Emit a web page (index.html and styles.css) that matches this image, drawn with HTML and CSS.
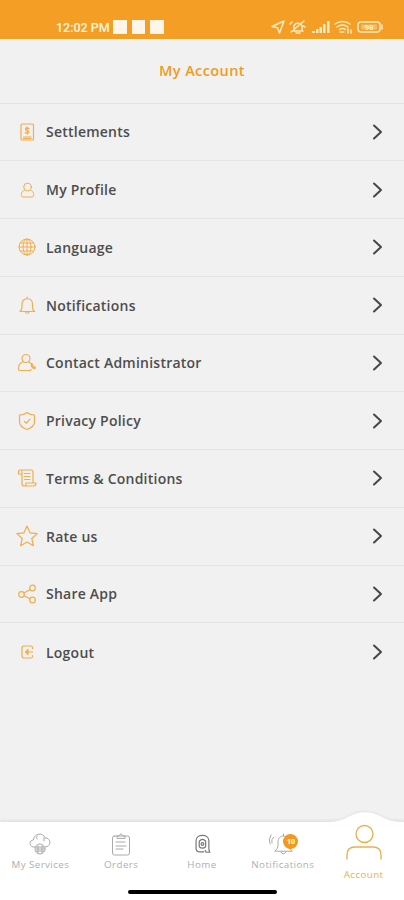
FILE: index.html
```html
<!DOCTYPE html>
<html lang="en">

<head>
    <meta charset="UTF-8">
    <meta name="viewport" content="width=device-width, initial-scale=1">
    <link rel="stylesheet" href="styles.css">
    <title>My Account</title>
</head>

<body>
    <div class="status">
        <span class="time">12:02 PM</span>
        <span class="squares"><i></i><i></i><i></i></span>
        <svg class="status-icons" width="116" height="16" viewBox="0 0 116 16">
            <path d="M2 7.5 14 2 9.5 14 7.5 8.8z" />
            <path d="M22 12h11M24 11V7a4.300 4.300 0 0 1 8 0v4M26 14h4M21 13 34 2M20 5l2-2M33 7l2 1" />
            <path class="solid" d="M42 12h3v2h-3zM46 10h2.500v4H46zM49.500 8H52v6h-2.500zM53 5h2.500v9H53zM57 2h2.500v12H57z" />
            <path d="M65 5q7.500-5 15 0M67 8q5.500-4 11 0M69.500 10.500q3-2 6 0M70 13h4M78 10v4M81 11v3" />
            <rect x="88" y="3" width="22" height="10" rx="3" />
            <path d="M112 6v4" />
            <rect class="solid" x="91" y="5.500" width="16" height="5" rx="1" opacity=".4" />
            <text x="99" y="11">98</text>
        </svg>
    </div>

    <header class="title">My Account</header>

    <ul class="menu">
        <li>
            <svg class="icon" viewBox="0 0 24 24"><rect x="6" y="4" width="12.500" height="16" rx="1" /><path d="M14 8.500q-3.500-1.500-3.500.7c0 1.800 3.500.8 3.500 2.700q0 2-3.700.7M12.200 7v7M8.500 17h7.500M8.500 18.500h7.500" /></svg>
            <span>Settlements</span>
            <svg class="arrow" viewBox="0 0 12 18"><path d="M2 2.500 9 9l-7 6.500" /></svg>
        </li>
        <li>
            <svg class="icon thin" viewBox="0 0 24 24"><circle cx="12.500" cy="9" r="3.800" /><path d="M9.500 12c-3 1.500-3.500 4-3 6q.4 1 1.500 1h9q1.100 0 1.500-1c.5-2 0-4.500-3-6" /></svg>
            <span>My Profile</span>
            <svg class="arrow" viewBox="0 0 12 18"><path d="M2 2.500 9 9l-7 6.500" /></svg>
        </li>
        <li>
            <svg class="icon thin" viewBox="0 0 24 24"><circle cx="12" cy="12" r="8" /><ellipse cx="12" cy="12" rx="4" ry="8" /><path d="M12 4v16M4 12h16M5.500 8h13M5.500 16h13" /></svg>
            <span>Language</span>
            <svg class="arrow" viewBox="0 0 12 18"><path d="M2 2.500 9 9l-7 6.500" /></svg>
        </li>
        <li>
            <svg class="icon" viewBox="0 0 24 24"><path d="M5 18.500q2-2 2-4V11c0-7 10.500-7 10.500 0v3.500q0 2 2 4zM10.500 19q1.700 3 3.500 0M12.200 4v1.500" /></svg>
            <span>Notifications</span>
            <svg class="arrow" viewBox="0 0 12 18"><path d="M2 2.500 9 9l-7 6.500" /></svg>
        </li>
        <li>
            <svg class="icon" viewBox="0 0 24 24"><circle cx="11" cy="7.500" r="4" /><path d="M7.800 11C4.500 12 3.500 15 3.500 18q0 1.500 1.500 1.500h10.500l.5-1M14 11l2 1.500M16.500 12.500c-1 3 1.500 6 4 4.500l-1.500-1.500-1 .5-1-1.500.8-1z" /></svg>
            <span>Contact Administrator</span>
            <svg class="arrow" viewBox="0 0 12 18"><path d="M2 2.500 9 9l-7 6.500" /></svg>
        </li>
        <li>
            <svg class="icon" viewBox="0 0 24 24"><path d="M12 3.500q3 2.500 7.500 2.500v7c0 4-3.500 6-7.500 7.500-4-1.500-7.500-3.500-7.500-7.500V6Q9 6 12 3.500zM9.500 12.500l2 1.700 3.500-4" /></svg>
            <span>Privacy Policy</span>
            <svg class="arrow" viewBox="0 0 12 18"><path d="M2 2.500 9 9l-7 6.500" /></svg>
        </li>
        <li>
            <svg class="icon" viewBox="0 0 24 24"><path d="M7 8H3.500V6q0-2 2-2H16q2 0 2 2v10.500M5.500 4Q7 4 7 6v12q0 2 2 2h9.500q2.500 0 2.500-3H11v1.500Q11 20 9 20M9.500 7.500H15M9.500 10.500H15M9.500 13.500H15" /></svg>
            <span>Terms &amp; Conditions</span>
            <svg class="arrow" viewBox="0 0 12 18"><path d="M2 2.500 9 9l-7 6.500" /></svg>
        </li>
        <li>
            <svg class="icon" viewBox="0 0 24 24"><path d="m12 2 3 6.800 7.200.8-5.400 4.900 1.600 7.200L12 18l-6.400 3.700 1.600-7.200-5.400-4.900 7.200-.8z" /></svg>
            <span>Rate us</span>
            <svg class="arrow" viewBox="0 0 12 18"><path d="M2 2.500 9 9l-7 6.500" /></svg>
        </li>
        <li>
            <svg class="icon" viewBox="0 0 24 24"><circle cx="6.500" cy="12.500" r="2.800" /><circle cx="17.500" cy="6" r="2.800" /><circle cx="17.500" cy="18" r="2.800" /><path d="m9 11 6-3.500M9 13.800l6 3" /></svg>
            <span>Share App</span>
            <svg class="arrow" viewBox="0 0 12 18"><path d="M2 2.500 9 9l-7 6.500" /></svg>
        </li>
        <li>
            <svg class="icon" viewBox="0 0 24 24"><path d="M17.500 8.500V7.500q0-1.500-1.500-1.500H9Q7 6 7 8v8q0 2 2 2h7q1.500 0 1.500-1.500V15.500M17.500 12h-6M13 9.500 10.500 12l2.500 2.500z" /></svg>
            <span>Logout</span>
            <svg class="arrow" viewBox="0 0 12 18"><path d="M2 2.500 9 9l-7 6.500" /></svg>
        </li>
    </ul>

    <nav class="tabs">
        <svg class="bump" width="76" height="14" viewBox="0 0 76 14"><path d="M0 14V12Q13 12 22 6.500 38-2 54 6.500q9 5.500 22 5.500v2z" /></svg>
        <a class="tab">
            <svg viewBox="0 0 24 24"><path d="M7 15H5c-4-1-4-7 .5-7C6 1 15 0 17 6c5-1 7 7 2 8.500l-2 .5M9 4q-1 2 0 3M16 6v3" /><circle cx="12" cy="17" r="5" /><path d="M8 15h8M8 17h8M8 19h8M10 14v7M14 14v7" /></svg>
            <span>My Services</span>
        </a>
        <a class="tab">
            <svg viewBox="0 0 24 24"><rect x="3.500" y="4" width="17" height="19" rx="2" /><path d="M8 6V4h2q2-4 4 0h2v2zM7 10h9M7 14h10M7 17h7" /></svg>
            <span>Orders</span>
        </a>
        <a class="tab home">
            <svg viewBox="0 0 24 24"><path d="M9 20.500q-3.500-.5-3.500-4V8.500c0-8 14-8 14 0v8q0 3 1 4.500h-4l-1-2M9 20.500h5M9 15V9q3.500-4 7 0v6q-3.500 3-7 0z" /><circle cx="12.500" cy="12" r="1.500" /></svg>
            <span>Home</span>
        </a>
        <a class="tab">
            <svg viewBox="0 0 24 24"><path d="M4 19q3-2 3-5v-4c0-8 11-8 11 0v4q0 3 3 5zM10 20q2 4 5 0M3 5Q0 7 1 11M0 3q-3 4-1 9M12.500 2v2" /></svg>
            <b class="badge">10</b>
            <span>Notifications</span>
        </a>
        <a class="tab active">
            <svg viewBox="0 0 38 38"><circle cx="19.500" cy="10" r="8.500" /><path d="M2 35v-4q0-8 8-8h18q8 0 8 8v4" /></svg>
            <span>Account</span>
        </a>
        <div class="handle"></div>
    </nav>
</body>

</html>
```
FILE: styles.css
```css
* {
    box-sizing: border-box;
}

body {
    margin: 0;
    height: 900px;
    display: flex;
    flex-direction: column;
    overflow: hidden;
    background: #f1f1f1;
    font-family: "Open Sans", "Noto Sans", sans-serif;
}

svg {
    fill: none;
    stroke-linecap: round;
    stroke-linejoin: round;
    overflow: visible;
}

.status {
    height: 39px;
    padding: 15px 18px 0 56px;
    display: flex;
    align-items: center;
    background: #f59e25;
    color: #fff3df;
}

.time {
    width: 57px;
    font: 500 12.500px Roboto, sans-serif;
    white-space: nowrap;
}

.squares {
    display: flex;
    gap: 5px;
}

.squares i {
    width: 13.500px;
    height: 13.500px;
    background: #fff6e9;
}

.status-icons {
    margin-left: auto;
    stroke: #ffe9c4;
    stroke-width: 1.500;
}

.status-icons .solid {
    fill: #ffe9c4;
    stroke: none;
}

.status-icons text {
    fill: #fff3df;
    stroke: none;
    font: bold 8px Roboto, sans-serif;
    text-anchor: middle;
}

.title {
    height: 64.500px;
    border-bottom: 1.500px solid #e2e2e2;
    color: #f39a20;
    font-size: 14.500px;
    font-weight: 600;
    letter-spacing: 0.400px;
    line-height: 64px;
    text-align: center;
}

.menu {
    list-style: none;
    margin: 0;
    padding: 0;
}

.menu li {
    height: 57.750px;
    padding: 0 20px 0 15px;
    display: flex;
    align-items: center;
    border-bottom: 1.500px solid #e5e5e5;
    color: #4d4d4d;
    font-size: 14px;
    font-weight: 600;
    letter-spacing: 0.230px;
}

.menu li:last-child {
    border-bottom: 0;
}

.icon {
    width: 24px;
    height: 24px;
    margin-right: 7px;
    stroke: #f4ac4c;
    stroke-width: 1.200;
}

.thin {
    stroke-width: 1;
}

.arrow {
    width: 12px;
    height: 18px;
    margin-left: auto;
    stroke: #454749;
    stroke-width: 2;
}

.tabs {
    position: relative;
    height: 78px;
    margin-top: auto;
    display: flex;
    background: #fff;
    box-shadow: 0 -2px 2px #e3e3e3;
}

.bump {
    position: absolute;
    right: 1px;
    top: -12px;
    fill: #fff;
    filter: drop-shadow(0 -1px 1px #e3e3e3);
}

.tab {
    position: relative;
    width: 81px;
    padding-top: 10px;
    display: flex;
    flex-direction: column;
    align-items: center;
    color: #b0b0b0;
    font-size: 9.800px;
    letter-spacing: 0.400px;
    line-height: 14px;
}

.tab svg {
    width: 24px;
    height: 24px;
    margin-bottom: 2px;
    stroke: #aaa;
    stroke-width: 1;
}

.tab.home svg {
    width: 22px;
    stroke: #777;
    stroke-width: 1.300;
}

.badge {
    position: absolute;
    left: 41px;
    top: 12px;
    width: 15px;
    height: 15px;
    border-radius: 50%;
    background: #f2991f;
    color: #fff;
    font-size: 7px;
    letter-spacing: 0;
    line-height: 15px;
    text-align: center;
}

.tab.active {
    padding-top: 2px;
    color: #eeb04f;
}

.tab.active svg {
    width: 38px;
    height: 38px;
    margin-bottom: 6px;
    stroke: #edae4d;
    stroke-width: 1.300;
}

.handle {
    position: absolute;
    left: 128px;
    bottom: 6px;
    width: 149px;
    height: 4px;
    border-radius: 2px;
    background: #000;
}
```
